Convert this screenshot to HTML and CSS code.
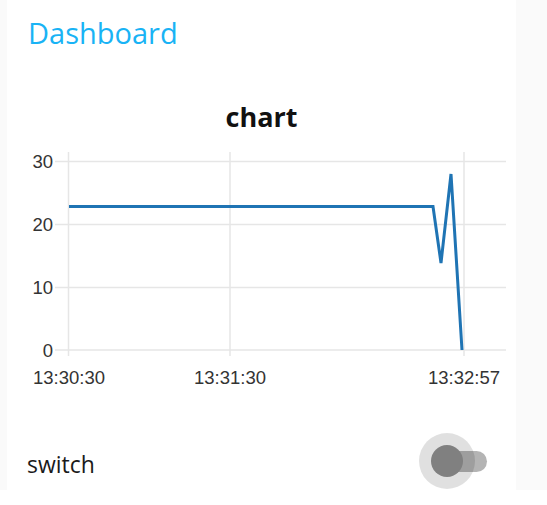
FILE: index.html
```html
<!DOCTYPE html>
<html>
<head>
<meta charset="utf-8">
<link rel="stylesheet" href="styles.css">
</head>
<body>
<div class="page">
  <div class="card">
    <h1 class="title">Dashboard</h1>
    <h2 class="chart-title">chart</h2>
    <svg class="chart" width="509" height="255" viewBox="0 0 509 255">
      <g class="grid">
        <line x1="48" y1="21.5" x2="499" y2="21.5"/>
        <line x1="48" y1="84.5" x2="499" y2="84.5"/>
        <line x1="48" y1="147.5" x2="499" y2="147.5"/>
        <line x1="48" y1="210" x2="499" y2="210"/>
        <line x1="61.5" y1="12" x2="61.5" y2="216"/>
        <line x1="223" y1="12" x2="223" y2="216"/>
        <line x1="457" y1="12" x2="457" y2="216"/>
      </g>
      <g class="ylab">
        <text x="46" y="28">30</text>
        <text x="46" y="91">20</text>
        <text x="46" y="154">10</text>
        <text x="46" y="216.5">0</text>
      </g>
      <g class="xlab">
        <text x="62" y="244">13:30:30</text>
        <text x="223" y="244">13:31:30</text>
        <text x="457" y="244">13:32:57</text>
      </g>
      <polyline class="series" points="62,66.5 426,66.5 434,123 444,34 455,210"/>
    </svg>
    <div class="switch-row">
      <span class="switch-label">switch</span>
      <div class="toggle">
        <span class="track"></span>
        <span class="halo"></span>
        <span class="thumb"></span>
      </div>
    </div>
  </div>
</div>
</body>
</html>
```

FILE: styles.css
```css
html, body {
  margin: 0;
  padding: 0;
  background: #ffffff;
}

.page {
  width: 547px;
  height: 490px;
  background: #fafafa;
  padding-left: 7px;
  box-sizing: border-box;
}

.card {
  width: 509px;
  height: 490px;
  background: #ffffff;
  padding-top: 14px;
  box-sizing: border-box;
  display: flex;
  flex-direction: column;
}

.title {
  margin: 0 0 0 21px;
  font-family: "Open Sans", sans-serif;
  font-weight: 500;
  font-size: 29px;
  line-height: 38px;
  color: #19b3f5;
}

.chart-title {
  margin: 46px 0 0 0;
  font-family: "Open Sans", sans-serif;
  font-weight: 700;
  font-size: 27px;
  line-height: 38px;
  color: #111111;
  text-align: center;
}

.chart {
  display: block;
  margin-top: 4px;
}

.grid line {
  stroke: #e6e6e6;
  stroke-width: 1.5;
}

.ylab text,
.xlab text {
  font-family: "Liberation Sans", Arial, sans-serif;
  font-size: 18.5px;
  fill: #333333;
}

.ylab text {
  text-anchor: end;
}

.xlab text {
  text-anchor: middle;
}

.series {
  fill: none;
  stroke: #1f74b4;
  stroke-width: 3;
  stroke-linejoin: miter;
}

.switch-row {
  margin-top: 37px;
  height: 58px;
  display: flex;
  align-items: center;
  justify-content: space-between;
  padding: 0 29px 0 20px;
}

.switch-label {
  font-family: "Open Sans", sans-serif;
  font-size: 23px;
  color: #1a1a1a;
  margin-top: 6px;
}

.toggle {
  position: relative;
  width: 56px;
  height: 32px;
  display: flex;
  align-items: center;
  justify-content: flex-end;
}

.track {
  width: 50px;
  height: 21px;
  border-radius: 11px;
  background: #b4b4b4;
}

.halo {
  position: absolute;
  left: -12px;
  top: -12px;
  width: 56px;
  height: 56px;
  border-radius: 50%;
  background: rgba(0, 0, 0, 0.12);
}

.thumb {
  position: absolute;
  left: 0;
  top: 0;
  width: 32px;
  height: 32px;
  border-radius: 50%;
  background: #808080;
}
```
